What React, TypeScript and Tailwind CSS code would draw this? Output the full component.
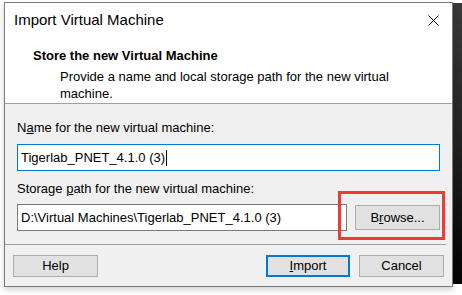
import React from "react";

const ui = { fontFamily: '"Liberation Sans", Arial, sans-serif' };

function WinButton({ children, primary = false, className = "" }: { children: React.ReactNode; primary?: boolean; className?: string }) {
  return (
    <button
      className={`flex items-center justify-center bg-[#e1e1e1] text-[13px] text-black ${
        primary ? "border-2 border-[#0078d7]" : "border border-[#adadad]"
      } ${className}`}
    >
      {children}
    </button>
  );
}

export default function App() {
  return (
    <div className="relative w-[462px] h-[295px] bg-white overflow-hidden" style={ui}>
      {/* dark window behind the dialog on the right */}
      <div className="absolute left-[453px] top-[3px] w-[9px] h-[281px] bg-gradient-to-b from-[#3a3a3a] via-[#222] to-[#050505]" />

      <div className="relative ml-[4px] mt-[2px] w-[449px] h-[285px] border border-[#7a7a7a] flex flex-col shadow-[0_3px_6px_rgba(0,0,0,0.18)]">
        {/* title + wizard header */}
        <div className="bg-white border-b border-[#a0a0a0] h-[101px] flex flex-col">
          <div className="h-[35px] flex items-center justify-between pl-[9px] pr-[13px]">
            <span className="text-[15px] text-black">Import Virtual Machine</span>
            <svg width="11" height="11" viewBox="0 0 11 11">
              <path d="M0.5 0.5 L10.5 10.5 M10.5 0.5 L0.5 10.5" stroke="#000" strokeWidth="1" />
            </svg>
          </div>
          <div className="pl-[28px] pt-[10px] text-[13px] text-black">
            <div className="font-bold leading-[16px]">Store the new Virtual Machine</div>
            <div className="pl-[27px] pt-[4px] leading-[17px] w-[370px]">
              Provide a name and local storage path for the new virtual machine.
            </div>
          </div>
        </div>

        {/* body */}
        <div className="flex-1 bg-[#f0f0f0] flex flex-col text-[13px] text-black">
          <div className="px-[12px] pt-[16px]">
            <div className="leading-[16px]">
              N<span className="underline">a</span>me for the new virtual machine:
            </div>
            <div className="mt-[8px] h-[27px] w-[423px] border border-[#0078d7] bg-white flex items-center pl-[3px]">
              <span>Tigerlab_PNET_4.1.0 (3)</span>
              <span className="ml-[1px] w-px h-[16px] bg-black" />
            </div>
            <div className="mt-[10px] leading-[16px]">
              Storage <span className="underline">p</span>ath for the new virtual machine:
            </div>
            <div className="relative mt-[7px] flex items-center gap-[8px]">
              <div className="h-[27px] w-[330px] border border-[#7a7a7a] bg-white flex items-center pl-[3px]">
                D:\Virtual Machines\Tigerlab_PNET_4.1.0 (3)
              </div>
              <WinButton className="w-[85px] h-[25px]">
                B<span className="underline">r</span>owse...
              </WinButton>
              {/* red highlight */}
              <div className="absolute left-[321px] top-[-13px] w-[107px] h-[49px] border-[3px] border-[#ee3a3a]" />
            </div>
          </div>

          <div className="mt-[13px] mr-[6px] border-t border-[#a0a0a0]" />

          <div className="flex items-center px-[8px] pt-[10px]">
            <WinButton className="w-[85px] h-[22px]">Help</WinButton>
            <div className="flex-1" />
            <WinButton primary className="w-[84px] h-[22px]">
              <span className="underline">I</span>mport
            </WinButton>
            <WinButton className="ml-[9px] w-[85px] h-[22px]">Cancel</WinButton>
          </div>
        </div>
      </div>
    </div>
  );
}
